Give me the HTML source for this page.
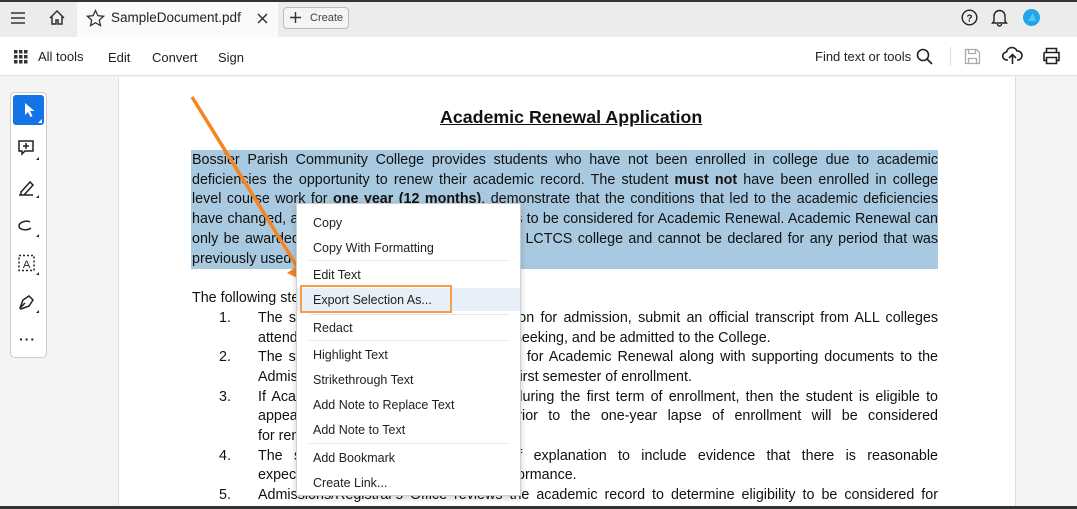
<!DOCTYPE html>
<html><head><meta charset="utf-8"><style>
*{margin:0;padding:0;box-sizing:border-box}
body{width:1077px;height:509px;overflow:hidden;background:#f4f4f4;font-family:"Liberation Sans",sans-serif;position:relative;color:#222}
.abs{position:absolute}
#top{left:0;top:0;width:1077px;height:37px;background:#ececec;border-top:2px solid #333}
#tab{left:77px;top:2px;width:201px;height:35px;background:#fafafa}
#bar2{left:0;top:37px;width:1077px;height:39px;background:#fff;border-bottom:1px solid #e2e2e2}
.t13{font-size:13px;color:#222}
#page{left:118px;top:77px;width:898px;height:432px;background:#fff;border-left:1px solid #ddd;border-right:1px solid #ddd}
#bottom{left:0;top:506px;width:1077px;height:3px;background:#333}
.ln{position:absolute;left:192px;width:746px;font-size:14.3px;white-space:nowrap;height:19px;line-height:19px;color:#111}
.j{text-align:justify;text-align-last:justify;white-space:normal;overflow:hidden}
.li{left:258px;width:680px}
.num{position:absolute;left:219px;font-size:14.3px;line-height:19px;color:#111}
#hl{left:191px;top:150px;width:747px;height:119px;background:#a8c9e0}
#menu{left:296px;top:203px;width:225px;height:293px;background:#fff;border:1px solid #cfcfcf;box-shadow:0 2px 6px rgba(0,0,0,.2)}
.mi{position:absolute;left:16px;font-size:12.5px;color:#222;line-height:16px}
.sep{position:absolute;left:12px;width:200px;height:1px;background:#e6e6e6}
#side{left:10px;top:92px;width:37px;height:266px;background:#fff;border:1px solid #ccc;border-radius:5px}
</style></head><body>
<div class="abs" id="top"></div>
<div class="abs" id="tab"></div>
<svg class="abs" style="left:10px;top:11px" width="16" height="14"><path d="M1 2h14M1 7h14M1 12h14" stroke="#333" stroke-width="1.6"/></svg>
<svg class="abs" style="left:48px;top:9px" width="18" height="17"><path d="M2 9L9 2l7 7M4 7v8h4v-4h2v4h4V7" fill="none" stroke="#333" stroke-width="1.5"/></svg>
<svg class="abs" style="left:86px;top:9px" width="19" height="18"><path d="M9.5 1.5l2.4 5.2 5.6.6-4.2 3.8 1.2 5.5-5-2.9-5 2.9 1.2-5.5L1.5 7.3l5.6-.6z" fill="none" stroke="#333" stroke-width="1.3"/></svg>
<div class="abs t13" style="left:111px;top:10px;font-size:13.5px">SampleDocument.pdf</div>
<svg class="abs" style="left:257px;top:13px" width="11" height="11"><path d="M1 1l9 9M10 1l-9 9" stroke="#333" stroke-width="1.5"/></svg>
<div class="abs" style="left:283px;top:7px;width:66px;height:22px;border:1px solid #bbb;border-radius:4px;background:#f4f4f4"></div>
<svg class="abs" style="left:290px;top:12px" width="11" height="11"><path d="M5.5 0v11M0 5.5h11" stroke="#333" stroke-width="1.4"/></svg>
<div class="abs" style="left:310px;top:12px;font-size:11px;color:#444">Create</div>
<svg class="abs" style="left:961px;top:9px" width="17" height="17"><circle cx="8.5" cy="8.5" r="7.3" fill="none" stroke="#222" stroke-width="1.4"/><text x="8.5" y="12.5" font-size="10" text-anchor="middle" font-family="Liberation Sans" font-weight="bold" fill="#222">?</text></svg>
<svg class="abs" style="left:991px;top:8px" width="17" height="19"><path d="M3 13V8a5.5 5.5 0 0 1 11 0v5l1.5 2h-14zM6.5 16a2 2 0 0 0 4 0" fill="none" stroke="#222" stroke-width="1.4"/></svg>
<svg class="abs" style="left:1022px;top:8px" width="19" height="19"><circle cx="9.5" cy="9.5" r="8.5" fill="#1fa6e8"/><path d="M6 13l5-8 3 8z" fill="#5cc6f2"/></svg>

<div class="abs" id="bar2"></div>
<svg class="abs" style="left:14px;top:50px" width="14" height="14" fill="#333"><rect x="0" y="0" width="3.5" height="3.5"/><rect x="5" y="0" width="3.5" height="3.5"/><rect x="10" y="0" width="3.5" height="3.5"/><rect x="0" y="5" width="3.5" height="3.5"/><rect x="5" y="5" width="3.5" height="3.5"/><rect x="10" y="5" width="3.5" height="3.5"/><rect x="0" y="10" width="3.5" height="3.5"/><rect x="5" y="10" width="3.5" height="3.5"/><rect x="10" y="10" width="3.5" height="3.5"/></svg>
<div class="abs t13" style="left:38px;top:49px">All tools</div>
<div class="abs t13" style="left:108px;top:50px">Edit</div>
<div class="abs t13" style="left:152px;top:50px">Convert</div>
<div class="abs t13" style="left:218px;top:50px">Sign</div>
<div class="abs t13" style="left:815px;top:49px">Find text or tools</div>
<svg class="abs" style="left:916px;top:48px" width="17" height="17"><circle cx="7" cy="7" r="5.5" fill="none" stroke="#222" stroke-width="1.6"/><path d="M11 11l5 5" stroke="#222" stroke-width="1.7"/></svg>
<div class="abs" style="left:950px;top:47px;width:1px;height:19px;background:#ddd"></div>
<svg class="abs" style="left:964px;top:48px" width="17" height="17"><path d="M1.5 1.5h11l3 3v11h-14z M4.5 1.5v4h7v-4 M4.5 15.5v-5h8v5" fill="none" stroke="#aaa" stroke-width="1.3"/></svg>
<svg class="abs" style="left:1002px;top:46px" width="21" height="20"><path d="M6 14H5a4 4 0 0 1-.5-8A5.5 5.5 0 0 1 15 5a4 4 0 0 1 1 9h-1M10.5 18V9M7 12l3.5-3.5L14 12" fill="none" stroke="#222" stroke-width="1.6"/></svg>
<svg class="abs" style="left:1042px;top:47px" width="19" height="18"><path d="M4.5 5V1.5h10V5M2 5.5h15v8h-2.5M4.5 13.5H2v-8M4.5 10.5h10v6h-10z" fill="none" stroke="#222" stroke-width="1.6"/></svg>

<div class="abs" id="page"></div>

<div class="abs" id="side"></div>
<div class="abs" style="left:13px;top:95px;width:31px;height:30px;background:#1473e6;border-radius:3px"></div>
<svg class="abs" style="left:13px;top:95px" width="31" height="30"><path d="M12 8v12l3-3 2.5 5 2-1-2.5-5h4.5z" fill="#fff"/><path d="M29 28h-4l4-4z" fill="#fff"/></svg>
<svg class="abs" style="left:17px;top:139px" width="24" height="22"><path d="M2 2h14v10H8l-3 3v-3H2z" fill="none" stroke="#222" stroke-width="1.5"/><path d="M9 4v6M6 7h6" stroke="#222" stroke-width="1.5"/><path d="M22 21h-3l3-3z" fill="#222"/></svg>
<svg class="abs" style="left:17px;top:177px" width="24" height="22"><path d="M4 15l9-10 3 3-9 10H4z M2 18h14" fill="none" stroke="#222" stroke-width="1.5"/><path d="M22 21h-3l3-3z" fill="#222"/></svg>
<svg class="abs" style="left:17px;top:216px" width="24" height="22"><path d="M13 6c-3-2-11 0-11 4 0 4 8 5 12 2" fill="none" stroke="#222" stroke-width="1.5"/><path d="M22 21h-3l3-3z" fill="#222"/></svg>
<svg class="abs" style="left:17px;top:254px" width="24" height="22"><rect x="2" y="1.5" width="15" height="15" fill="none" stroke="#222" stroke-width="1.5" stroke-dasharray="2 2"/><text x="9.5" y="14" font-size="11" text-anchor="middle" font-family="Liberation Sans" fill="#222">A</text><path d="M22 21h-3l3-3z" fill="#222"/></svg>
<svg class="abs" style="left:17px;top:292px" width="24" height="22"><path d="M3 16l3-8 6-4 4 4-4 6-8 3zM3 16l5-5" fill="none" stroke="#222" stroke-width="1.5"/><path d="M22 21h-3l3-3z" fill="#222"/></svg>
<div class="abs" style="left:19px;top:331px;font-size:14px;font-weight:bold;letter-spacing:1px">···</div>

<div class="abs" style="left:440px;top:107px;font-size:17.8px;font-weight:bold;text-decoration:underline;color:#111">Academic Renewal Application</div>
<div class="abs" id="hl"></div>
<div class="ln j" style="top:151px">Bossier Parish Community College provides students who have not been enrolled in college due to academic</div>
<div class="ln j" style="top:171px">deficiencies the opportunity to renew their academic record. The student <b>must not</b> have been enrolled in college</div>
<div class="ln j" style="top:190px">level course work for <b>one year (12 months)</b>, demonstrate that the conditions that led to the academic deficiencies</div>
<div class="ln j" style="top:210px">have changed, and meet the following requirements to be considered for Academic Renewal. Academic Renewal can</div>
<div class="ln j" style="top:230px">only be awarded once in a student's career at any LCTCS college and cannot be declared for any period that was</div>
<div class="ln" style="top:250px">previously used.</div>
<div class="ln" style="top:289px">The following steps must be taken:</div>
<div class="num" style="top:309px">1.</div><div class="ln j li" style="top:309px">The student must complete an application for admission, submit an official transcript from ALL colleges</div>
<div class="ln li" style="top:329px">attended, declare the program he/she is seeking, and be admitted to the College.</div>
<div class="num" style="top:348px">2.</div><div class="ln j li" style="top:348px">The student must submit the application for Academic Renewal along with supporting documents to the</div>
<div class="ln li" style="top:368px">Admissions/Registrar's Office during the first semester of enrollment.</div>
<div class="num" style="top:388px">3.</div><div class="ln j li" style="top:388px">If Academic Renewal is not requested during the first term of enrollment, then the student is eligible to</div>
<div class="ln j li" style="top:407px">appeal. Grades earned in courses prior to the one-year lapse of enrollment will be considered</div>
<div class="ln li" style="top:427px">for renewal.</div>
<div class="num" style="top:447px">4.</div><div class="ln j li" style="top:447px">The student must submit a letter of explanation to include evidence that there is reasonable</div>
<div class="ln li" style="top:466px">expectation of satisfactory academic performance.</div>
<div class="num" style="top:486px">5.</div><div class="ln j li" style="top:486px">Admissions/Registrar's Office reviews the academic record to determine eligibility to be considered for</div>

<svg class="abs" style="left:180px;top:90px" width="140" height="200"><path d="M12 7L118 178" stroke="#f7841f" stroke-width="3.5"/><path d="M126 192l-19-9 15-10z" fill="#f7841f"/></svg>

<div class="abs" id="menu">
<div class="mi" style="top:11px">Copy</div>
<div class="mi" style="top:36px">Copy With Formatting</div>
<div class="sep" style="top:56px"></div>
<div class="mi" style="top:63px">Edit Text</div>
<div style="position:absolute;left:0;top:84px;width:223px;height:23px;background:#e7eff8"></div>
<div style="position:absolute;left:3px;top:81px;width:152px;height:28px;border:2.5px solid #f5a043"></div>
<div class="mi" style="top:88px">Export Selection As...</div>
<div class="sep" style="top:110px"></div>
<div class="mi" style="top:116px">Redact</div>
<div class="sep" style="top:136px"></div>
<div class="mi" style="top:143px">Highlight Text</div>
<div class="mi" style="top:168px">Strikethrough Text</div>
<div class="mi" style="top:193px">Add Note to Replace Text</div>
<div class="mi" style="top:218px">Add Note to Text</div>
<div class="sep" style="top:239px"></div>
<div class="mi" style="top:246px">Add Bookmark</div>
<div class="mi" style="top:271px">Create Link...</div>
</div>
<div class="abs" id="bottom"></div>
</body></html>
